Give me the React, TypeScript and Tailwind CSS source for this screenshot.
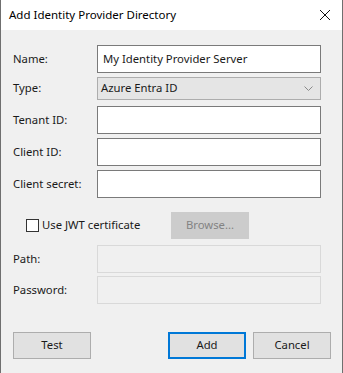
import React from "react"

const font = { fontFamily: '"Segoe UI", "Noto Sans", sans-serif' }

function Label({ children }: { children: React.ReactNode }) {
  return <div className="w-[84px] shrink-0 text-[11.3px] text-[#1a1a1a]">{children}</div>
}

function TextBox({ value, disabled }: { value?: string; disabled?: boolean }) {
  return (
    <div
      className={`flex h-[28px] w-[224px] items-center border px-[5px] text-[11.3px] ${
        disabled ? "border-[#d9d9d9] bg-[#f0f0f0]" : "border-[#7a7a7a] bg-white"
      }`}
    >
      {value}
    </div>
  )
}

function Button({ label, primary, disabled }: { label: string; primary?: boolean; disabled?: boolean }) {
  return (
    <div
      className={`flex h-[27px] w-[78px] items-center justify-center text-[11.3px] ${
        primary
          ? "border-2 border-[#0078d7] bg-[#e1e1e1] text-[#1a1a1a]"
          : disabled
            ? "border border-[#cccccc] bg-[#cccccc] text-[#838383]"
            : "border border-[#adadad] bg-[#e1e1e1] text-[#1a1a1a]"
      }`}
    >
      {label}
    </div>
  )
}

export default function App() {
  return (
    <div className="flex h-[373px] w-[343px] flex-col border-x border-[#6f6f6f] bg-[#f0f0f0] text-[#1a1a1a]" style={font}>
      {/* title bar */}
      <div className="flex h-[30px] shrink-0 items-center justify-between bg-white pl-[8px] pr-[11px]">
        <span className="text-[11.5px] text-black">Add Identity Provider Directory</span>
        <svg width="12" height="12" viewBox="0 0 12 12">
          <path d="M1 1 L11 11 M11 1 L1 11" stroke="#111" strokeWidth="1" />
        </svg>
      </div>

      <div className="flex flex-col px-[12px] pt-[15px]">
        <div className="flex items-center">
          <Label>Name:</Label>
          <TextBox value="My Identity Provider Server" />
        </div>
        <div className="mt-[4px] flex items-center">
          <Label>Type:</Label>
          <div className="flex h-[23px] w-[224px] items-center justify-between border border-[#adadad] bg-[#e5e5e5] pl-[3px] pr-[7px] text-[11.3px]">
            <span>Azure Entra ID</span>
            <svg width="9" height="6" viewBox="0 0 9 6">
              <path d="M0.5 0.5 L4.5 4.5 L8.5 0.5" fill="none" stroke="#8a8a8a" strokeWidth="1" />
            </svg>
          </div>
        </div>
        <div className="mt-[6px] flex items-center">
          <Label>Tenant ID:</Label>
          <TextBox />
        </div>
        <div className="mt-[4px] flex items-center">
          <Label>Client ID:</Label>
          <TextBox />
        </div>
        <div className="mt-[4px] flex items-center">
          <Label>Client secret:</Label>
          <TextBox />
        </div>

        <div className="mt-[14px] flex items-center">
          <div className="ml-[13px] flex w-[145px] items-center gap-[3px]">
            <div className="h-[13px] w-[13px] border border-[#333333] bg-white" />
            <span className="text-[11.3px]">Use JWT certificate</span>
          </div>
          <Button label="Browse..." disabled />
        </div>

        <div className="mt-[6px] flex items-center">
          <Label>Path:</Label>
          <TextBox disabled />
        </div>
        <div className="mt-[3px] flex items-center">
          <Label>Password:</Label>
          <TextBox disabled />
        </div>

        <div className="mt-[28px] flex items-center">
          <Button label="Test" />
          <div className="ml-auto mr-[-1px] flex gap-[7px]">
            <Button label="Add" primary />
            <Button label="Cancel" />
          </div>
        </div>
      </div>
    </div>
  )
}
